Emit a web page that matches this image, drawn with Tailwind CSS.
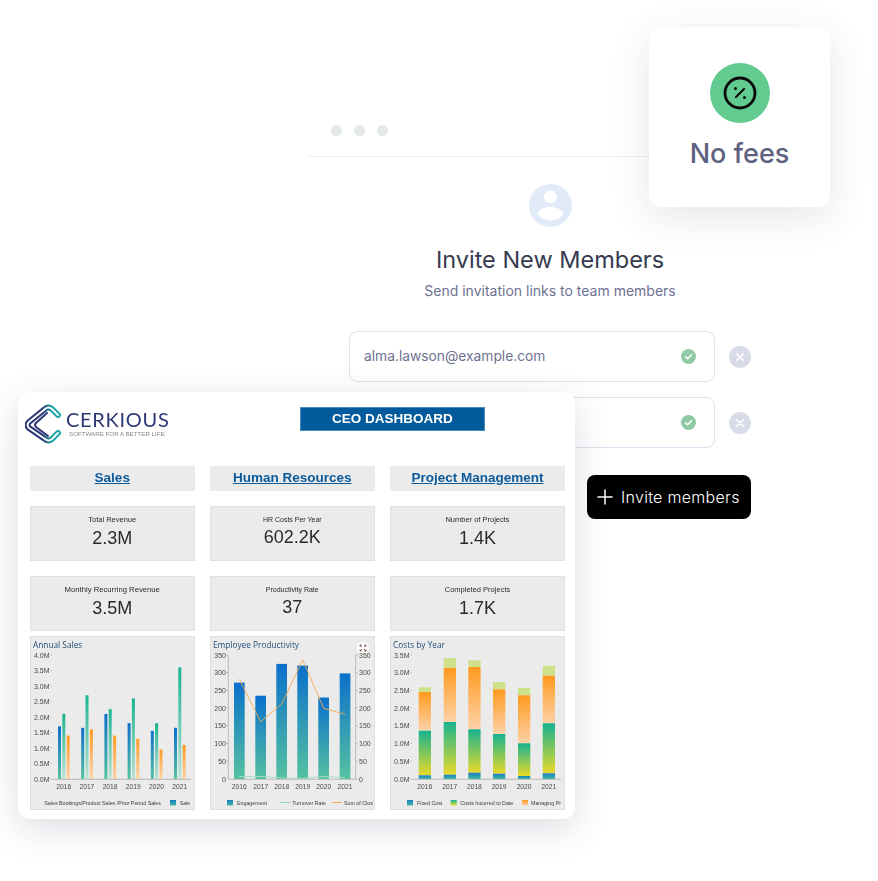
<!DOCTYPE html>
<html lang="en">
<head>
<meta charset="utf-8">
<title>Invite members</title>
<script src="https://cdn.jsdelivr.net/npm/@tailwindcss/browser@4"></script>
</head>
<body class="bg-white">
<div class="relative w-[878px] h-[881px] overflow-hidden bg-white font-['Inter',sans-serif]">

  <!-- Invite window -->
  <div class="absolute left-[308px] top-[118px] w-[484px] flex flex-col">
    <div class="h-[39px] border-b border-[#f0f1f2] flex items-start gap-[12px] pl-[23px] pt-[6.500px]">
      <span class="w-[11px] h-[11px] rounded-full bg-[#e4e8e9]"></span>
      <span class="w-[11px] h-[11px] rounded-full bg-[#e4e8e9]"></span>
      <span class="w-[11px] h-[11px] rounded-full bg-[#e4e8e9]"></span>
    </div>
    <div class="flex flex-col items-center">
      <svg class="mt-[27px]" width="43" height="43" viewBox="0 0 43 43">
        <circle cx="21.500" cy="21.500" r="21.500" fill="#e0eaf8"/>
        <circle cx="21.500" cy="13" r="6.500" fill="#fff"/>
        <path d="M8.500 30c1.500-4.500 7-7 13-7s11.500 2.500 13 7c-3 4-8 6.700-13 6.700s-10-2.700-13-6.700z" fill="#fff"/>
      </svg>
      <h1 class="mt-[17px] text-[23.500px] leading-[32px] font-normal text-[#363a4f]">Invite New Members</h1>
      <p class="mt-[5px] text-[14px] leading-[20px] text-[#6e7191]">Send invitation links to team members</p>
    </div>
    <div class="mt-[30px] mx-[41px] flex flex-col gap-[15px]">
      <div class="flex items-center gap-[14px]">
        <div class="w-[366px] h-[51px] rounded-[8px] border border-[#dfe0ef] flex items-center justify-between pl-[14px] pr-[18px]">
          <span class="text-[13.800px] text-[#6e7191]">alma.lawson@example.com</span>
          <svg width="15" height="15" viewBox="0 0 15 15"><circle cx="7.500" cy="7.500" r="7.500" fill="#8fcaa4"/><path d="M4.500 7.800l2.100 2 3.900-4" fill="none" stroke="#fff" stroke-width="1.500" stroke-linecap="round" stroke-linejoin="round"/></svg>
        </div>
        <svg width="22" height="22" viewBox="0 0 22 22"><circle cx="11" cy="11" r="11" fill="#d9dbe9"/><path d="M7.500 7.500l7 7M14.500 7.500l-7 7" stroke="#fff" stroke-width="1.500" stroke-linecap="round"/></svg>
      </div>
      <div class="flex items-center gap-[14px]">
        <div class="w-[366px] h-[51px] rounded-[8px] border border-[#dfe0ef] flex items-center justify-end pr-[18px]">
          <svg width="15" height="15" viewBox="0 0 15 15"><circle cx="7.500" cy="7.500" r="7.500" fill="#8fcaa4"/><path d="M4.500 7.800l2.100 2 3.900-4" fill="none" stroke="#fff" stroke-width="1.500" stroke-linecap="round" stroke-linejoin="round"/></svg>
        </div>
        <svg width="22" height="22" viewBox="0 0 22 22"><circle cx="11" cy="11" r="11" fill="#d9dbe9"/><path d="M7.500 7.500l7 7M14.500 7.500l-7 7" stroke="#fff" stroke-width="1.500" stroke-linecap="round"/></svg>
      </div>
      <div class="mt-[12px] flex justify-end">
        <button class="w-[164px] h-[44px] rounded-[8px] bg-black text-white flex items-center gap-[8px] pl-[10px]">
          <svg width="16" height="16" viewBox="0 0 16 16"><path d="M8 1v14M1 8h14" stroke="#fff" stroke-width="1.500" stroke-linecap="round"/></svg>
          <span class="text-[16px] font-light tracking-[0.3px]">Invite members</span>
        </button>
      </div>
    </div>
  </div>

  <!-- No fees card -->
  <div class="absolute left-[649px] top-[27px] w-[181px] h-[180px] rounded-[12px] bg-white shadow-[0_10px_40px_rgba(40,50,80,0.12)] flex flex-col items-center pt-[36px]">
    <div class="w-[60px] h-[60px] rounded-full bg-[#62cb8f] flex items-center justify-center">
      <svg width="34" height="34" viewBox="0 0 34 34">
        <circle cx="17" cy="17" r="15" fill="none" stroke="#0a0a0a" stroke-width="2.800"/>
        <path d="M21 13l-8 8" stroke="#0a0a0a" stroke-width="2.200" stroke-linecap="round"/>
        <circle cx="12.500" cy="12.500" r="1.500" fill="#0a0a0a"/>
        <circle cx="21.500" cy="21.500" r="1.500" fill="#0a0a0a"/>
      </svg>
    </div>
    <div class="mt-[11px] text-[27px] leading-[40px] font-medium text-[#5e6180]">No fees</div>
  </div>

  <!-- Dashboard -->
  <div class="absolute left-[18px] top-[392px] w-[557px] h-[427px] rounded-[12px] bg-white shadow-[0_10px_36px_rgba(40,50,80,0.16)] pl-[12px] pr-[10px] font-['Liberation_Sans',sans-serif] blur-[0.3px]">
    <div class="h-[74px] relative">
      <svg class="absolute left-[-5px] top-[12px]" width="38" height="40" viewBox="0 0 38 40">
        <defs>
          <linearGradient id="lg" x1="0" y1="0" x2="1" y2="0"><stop offset="0.500" stop-color="#2c3878"/><stop offset="0.800" stop-color="#1aa6a6"/></linearGradient>
        </defs>
        <path d="M33 11L27 5Q23.500 2 20 5L4 18Q1 21 4 24L20 35Q23.500 38 27 35L33 29" fill="none" stroke="url(#lg)" stroke-width="6" stroke-linecap="round" stroke-linejoin="round"/>
        <path d="M33 11L27 5Q23.500 2 20 5L4 18Q1 21 4 24L20 35Q23.500 38 27 35L33 29" fill="none" stroke="#fff" stroke-width="1.800" stroke-linecap="round" stroke-linejoin="round"/>
        <path d="M22 9L11 19Q9 21 11 23L23 32" fill="none" stroke="#2c3878" stroke-width="2" stroke-linecap="round"/>
      </svg>
      <div class="absolute left-[36px] top-[17px] font-['Lato',sans-serif] text-[20px] leading-[20px] tracking-[0.700px] text-[#2c3878]">CERKIOUS</div>
      <div class="absolute left-[39px] top-[38px] text-[6.200px] leading-[8px] text-[#8a8a8e] whitespace-nowrap">SOFTWARE FOR A BETTER LIFE</div>
      <div class="absolute left-[270px] top-[15px] w-[185px] h-[24px] bg-[#005a9c] border border-[#4a8bbd] text-white text-[13.500px] font-bold flex items-center justify-center">CEO DASHBOARD</div>
    </div>

    <div class="grid grid-cols-[164.500px_164.500px_175px] gap-x-[15.500px]">
      <div class="h-[25px] bg-[#ebebeb] flex items-center justify-center pb-[1px] text-[13.500px] font-bold underline text-[#0a5a9c]">Sales</div>
      <div class="h-[25px] bg-[#ebebeb] flex items-center justify-center pb-[1px] text-[13.500px] font-bold underline text-[#0a5a9c]">Human Resources</div>
      <div class="h-[25px] bg-[#ebebeb] flex items-center justify-center pb-[1px] text-[13.500px] font-bold underline text-[#0a5a9c]">Project Management</div>

      <div class="mt-[15px] h-[55px] bg-[#ebebeb] border border-[#e0e0e0] flex flex-col items-center pt-[8px] text-[#2a2a2a]"><span class="text-[7.500px] leading-[10px]">Total Revenue</span><span class="text-[18px] leading-[27px]">2.3M</span></div>
      <div class="mt-[15px] h-[55px] bg-[#ebebeb] border border-[#e0e0e0] flex flex-col items-center pt-[8px] text-[#2a2a2a]"><span class="text-[7px] leading-[10px]">HR Costs Per Year</span><span class="text-[18px] leading-[25px]">602.2K</span></div>
      <div class="mt-[15px] h-[55px] bg-[#ebebeb] border border-[#e0e0e0] flex flex-col items-center pt-[8px] text-[#2a2a2a]"><span class="text-[7.500px] leading-[10px]">Number of Projects</span><span class="text-[18px] leading-[27px]">1.4K</span></div>

      <div class="mt-[15px] h-[55px] bg-[#ebebeb] border border-[#e0e0e0] flex flex-col items-center pt-[8px] text-[#2a2a2a]"><span class="text-[7.700px] leading-[10px]">Monthly Recurring Revenue</span><span class="text-[18px] leading-[27px]">3.5M</span></div>
      <div class="mt-[15px] h-[55px] bg-[#ebebeb] border border-[#e0e0e0] flex flex-col items-center pt-[8px] text-[#2a2a2a]"><span class="text-[7px] leading-[10px]">Productivity Rate</span><span class="text-[18px] leading-[25px]">37</span></div>
      <div class="mt-[15px] h-[55px] bg-[#ebebeb] border border-[#e0e0e0] flex flex-col items-center pt-[8px] text-[#2a2a2a]"><span class="text-[7.500px] leading-[10px]">Completed Projects</span><span class="text-[18px] leading-[27px]">1.7K</span></div>

      <!-- Annual Sales -->
      <div class="mt-[5px] h-[174px] bg-[#ebebeb] border border-[#dfdfdf] overflow-hidden">
        <svg class="block" width="164" height="174" viewBox="1 1 164 174">
          <defs>
            <linearGradient id="gb" x1="0" y1="0" x2="0" y2="1"><stop offset="0" stop-color="#0b70cc"/><stop offset="1" stop-color="#55c2a0"/></linearGradient>
            <linearGradient id="gg" x1="0" y1="0" x2="0" y2="1"><stop offset="0" stop-color="#17b38f"/><stop offset="1" stop-color="#bde3d6"/></linearGradient>
            <linearGradient id="go" x1="0" y1="0" x2="0" y2="1"><stop offset="0" stop-color="#ff9a1f"/><stop offset="1" stop-color="#fdd2a8"/></linearGradient>
            <linearGradient id="gv" x1="0" y1="0" x2="0" y2="1"><stop offset="0" stop-color="#17b38f"/><stop offset="1" stop-color="#e8d92a"/></linearGradient>
            <linearGradient id="gf" x1="0" y1="0" x2="0" y2="1"><stop offset="0" stop-color="#1a7fc4"/><stop offset="1" stop-color="#3fb8a2"/></linearGradient>
          </defs>
          <text x="3" y="12" font-family="Open Sans" font-size="8.300" fill="#1f4e79">Annual Sales</text>
          <g font-family="Liberation Sans" font-size="7" fill="#4a4a4a" text-anchor="end">
            <text x="19.500" y="21.500">4.0M</text><text x="19.500" y="37">3.5M</text><text x="19.500" y="52.500">3.0M</text><text x="19.500" y="68">2.5M</text><text x="19.500" y="83.500">2.0M</text><text x="19.500" y="99">1.5M</text><text x="19.500" y="114.500">1.0M</text><text x="19.500" y="130">0.5M</text><text x="19.500" y="145.500">0.0M</text>
          </g>
          <path d="M20.500 19h1.500M20.500 34.500h1.500M20.500 50h1.500M20.500 65.500h1.500M20.500 81h1.500M20.500 96.500h1.500M20.500 112h1.500M20.500 127.500h1.500M20.500 143h1.500" stroke="#aaa" stroke-width="0.700"/>
          <path d="M22 143.300h139" stroke="#a8a8a8" stroke-width="0.800"/>
          <g fill="url(#gb)"><rect x="28" y="90.300" width="3" height="52.700"/><rect x="51.200" y="91.800" width="3" height="51.200"/><rect x="74.400" y="77.900" width="3" height="65.100"/><rect x="97.600" y="87.200" width="3" height="55.800"/><rect x="120.800" y="94.900" width="3" height="48.100"/><rect x="144" y="91.800" width="3" height="51.200"/></g>
          <g fill="url(#gg)"><rect x="32.300" y="77.900" width="3" height="65.100"/><rect x="55.500" y="59.300" width="3" height="83.700"/><rect x="78.700" y="73.200" width="3" height="69.800"/><rect x="101.900" y="62.400" width="3" height="80.600"/><rect x="125.100" y="87.200" width="3" height="55.800"/><rect x="148.300" y="31.400" width="3" height="111.600"/></g>
          <g fill="url(#go)"><rect x="36.700" y="99.600" width="3" height="43.400"/><rect x="59.900" y="93.400" width="3" height="49.600"/><rect x="83.100" y="99.600" width="3" height="43.400"/><rect x="106.300" y="102.700" width="3" height="40.300"/><rect x="129.500" y="113.500" width="3" height="29.500"/><rect x="152.700" y="108.900" width="3" height="34.100"/></g>
          <g font-family="Liberation Sans" font-size="6.700" fill="#4a4a4a" text-anchor="middle"><text x="33.700" y="153">2016</text><text x="56.900" y="153">2017</text><text x="80.100" y="153">2018</text><text x="103.300" y="153">2019</text><text x="126.500" y="153">2020</text><text x="149.700" y="153">2021</text></g>
          <text x="14.300" y="168.500" font-family="Liberation Sans" font-size="5.300" fill="#3a3a3a">Sales Bookings/Product Sales /Prior Period Sales</text>
          <rect x="140" y="164" width="6" height="5.500" fill="url(#gf)"/>
          <text x="149.700" y="168.500" font-family="Liberation Sans" font-size="5.300" fill="#3a3a3a">Sale</text>
        </svg>
      </div>

      <!-- Employee Productivity -->
      <div class="mt-[5px] h-[174px] bg-[#ebebeb] border border-[#dfdfdf] overflow-hidden">
        <svg class="block" width="164" height="174" viewBox="1 1 164 174">
          <text x="3" y="12" font-family="Open Sans" font-size="8.300" fill="#1f4e79">Employee Productivity</text>
          <circle cx="153" cy="12" r="6" fill="#fff"/>
          <path d="M150 9l2 2M150 9h1.500M150 9v1.500M156 9l-2 2M156 9h-1.500M156 9v1.500M150 15l2-2M150 15h1.500M150 15v-1.500M156 15l-2-2M156 15h-1.500M156 15v-1.500" stroke="#7a2a2a" stroke-width="0.800" fill="none"/>
          <g font-family="Liberation Sans" font-size="7" fill="#4a4a4a" text-anchor="end">
            <text x="16" y="21.500">350</text><text x="16" y="39.200">300</text><text x="16" y="56.900">250</text><text x="16" y="74.600">200</text><text x="16" y="92.300">150</text><text x="16" y="110">100</text><text x="16" y="127.700">50</text><text x="16" y="145.500">0</text>
          </g>
          <g font-family="Liberation Sans" font-size="7" fill="#4a4a4a">
            <text x="149" y="21.500">350</text><text x="149" y="39.200">300</text><text x="149" y="56.900">250</text><text x="149" y="74.600">200</text><text x="149" y="92.300">150</text><text x="149" y="110">100</text><text x="149" y="127.700">50</text><text x="149" y="145.500">0</text>
          </g>
          <path d="M18.300 19v124.300M145.700 19v124.300M18.300 143.300h127.400M16.500 19h1.800M16.500 36.700h1.800M16.500 54.400h1.800M16.500 72.100h1.800M16.500 89.800h1.800M16.500 107.500h1.800M16.500 125.200h1.800M145.700 19h1.800M145.700 36.700h1.800M145.700 54.400h1.800M145.700 72.100h1.800M145.700 89.800h1.800M145.700 107.500h1.800M145.700 125.200h1.800M145.700 143h1.800" stroke="#a8a8a8" stroke-width="0.700" fill="none"/>
          <g fill="url(#gb)"><rect x="24" y="46.600" width="10.700" height="96.400"/><rect x="45.300" y="59.700" width="10.700" height="83.300"/><rect x="66.300" y="27.900" width="10.700" height="115.100"/><rect x="87.300" y="29.600" width="10.700" height="113.400"/><rect x="108.300" y="61.500" width="10.700" height="81.500"/><rect x="129.700" y="37.400" width="10.700" height="105.600"/></g>
          <polyline points="29.300,140.500 50.700,140.500 71.700,142 92.700,142.500 113.700,140.500 135,141.500" fill="none" stroke="#a8dcc8" stroke-width="1"/>
          <polyline points="29.300,43.300 50.700,85.700 71.700,68 92.700,24 113.700,72.300 135,78.300" fill="none" stroke="#f5a94f" stroke-width="0.900"/>
          <g font-family="Liberation Sans" font-size="6.700" fill="#4a4a4a" text-anchor="middle"><text x="29.300" y="153">2016</text><text x="50.700" y="153">2017</text><text x="71.700" y="153">2018</text><text x="92.700" y="153">2019</text><text x="113.700" y="153">2020</text><text x="135" y="153">2021</text></g>
          <rect x="17" y="164" width="6" height="5.500" fill="url(#gf)"/>
          <text x="27" y="168.500" font-family="Liberation Sans" font-size="5.300" fill="#3a3a3a">Engagement</text>
          <path d="M70 166.500h10" stroke="#8fd3bd" stroke-width="1"/>
          <text x="82.300" y="168.500" font-family="Liberation Sans" font-size="5.300" fill="#3a3a3a">Turnover Rate</text>
          <path d="M122 166.500h10" stroke="#f5a94f" stroke-width="1"/>
          <text x="134" y="168.500" font-family="Liberation Sans" font-size="5.300" fill="#3a3a3a">Sum of Clos</text>
        </svg>
      </div>

      <!-- Costs by Year -->
      <div class="mt-[5px] h-[174px] bg-[#ebebeb] border border-[#dfdfdf] overflow-hidden">
        <svg class="block" width="174" height="174" viewBox="1 1 174 174">
          <text x="3" y="12" font-family="Open Sans" font-size="8.300" fill="#1f4e79">Costs by Year</text>
          <g font-family="Liberation Sans" font-size="7" fill="#4a4a4a" text-anchor="end">
            <text x="19.500" y="21.500">3.5M</text><text x="19.500" y="39.200">3.0M</text><text x="19.500" y="56.900">2.5M</text><text x="19.500" y="74.600">2.0M</text><text x="19.500" y="92.300">1.5M</text><text x="19.500" y="110">1.0M</text><text x="19.500" y="127.700">0.5M</text><text x="19.500" y="145.500">0.0M</text>
          </g>
          <path d="M20.200 19h1.500M20.200 36.700h1.500M20.200 54.400h1.500M20.200 72.100h1.500M20.200 89.800h1.500M20.200 107.500h1.500M20.200 125.200h1.500M20.200 143h1.500M21.700 143.300h149.300" stroke="#a8a8a8" stroke-width="0.700" fill="none"/>
          <g fill="#cfe08a"><rect x="28.700" y="51.300" width="12.300" height="4.700"/><rect x="53.700" y="22" width="12.300" height="10"/><rect x="78.300" y="24.300" width="12.300" height="6.700"/><rect x="103" y="46" width="12.300" height="7.300"/><rect x="128" y="52" width="12.300" height="7.300"/><rect x="152.700" y="29.700" width="12.300" height="10"/></g>
          <g fill="url(#go)"><rect x="28.700" y="56" width="12.300" height="38.700"/><rect x="53.700" y="32" width="12.300" height="54"/><rect x="78.300" y="31" width="12.300" height="62.300"/><rect x="103" y="53.300" width="12.300" height="44.700"/><rect x="128" y="59.300" width="12.300" height="48"/><rect x="152.700" y="39.700" width="12.300" height="47.600"/></g>
          <g fill="url(#gv)"><rect x="28.700" y="94.700" width="12.300" height="44.600"/><rect x="53.700" y="86" width="12.300" height="52.700"/><rect x="78.300" y="93.300" width="12.300" height="43.400"/><rect x="103" y="98" width="12.300" height="39.700"/><rect x="128" y="107.300" width="12.300" height="32.700"/><rect x="152.700" y="87.300" width="12.300" height="50"/></g>
          <g fill="url(#gf)"><rect x="28.700" y="139.300" width="12.300" height="3.700"/><rect x="53.700" y="138.700" width="12.300" height="4.300"/><rect x="78.300" y="136.700" width="12.300" height="6.300"/><rect x="103" y="137.700" width="12.300" height="5.300"/><rect x="128" y="140" width="12.300" height="3"/><rect x="152.700" y="137.300" width="12.300" height="5.700"/></g>
          <g font-family="Liberation Sans" font-size="6.700" fill="#4a4a4a" text-anchor="middle"><text x="34.800" y="153">2016</text><text x="59.800" y="153">2017</text><text x="84.400" y="153">2018</text><text x="109.100" y="153">2019</text><text x="134.100" y="153">2020</text><text x="158.800" y="153">2021</text></g>
          <rect x="17" y="164" width="6" height="5.500" fill="url(#gf)"/>
          <text x="27" y="168.500" font-family="Liberation Sans" font-size="5.300" fill="#3a3a3a">Fixed Cost</text>
          <rect x="60.700" y="164" width="6" height="5.500" fill="url(#gv)"/>
          <text x="70.300" y="168.500" font-family="Liberation Sans" font-size="5.300" fill="#3a3a3a">Costs Incurred to Date</text>
          <rect x="132" y="164" width="6" height="5.500" fill="url(#go)"/>
          <text x="141" y="168.500" font-family="Liberation Sans" font-size="5.300" fill="#3a3a3a">Managing Pr</text>
        </svg>
      </div>
    </div>
  </div>
</div>
</body>
</html>
